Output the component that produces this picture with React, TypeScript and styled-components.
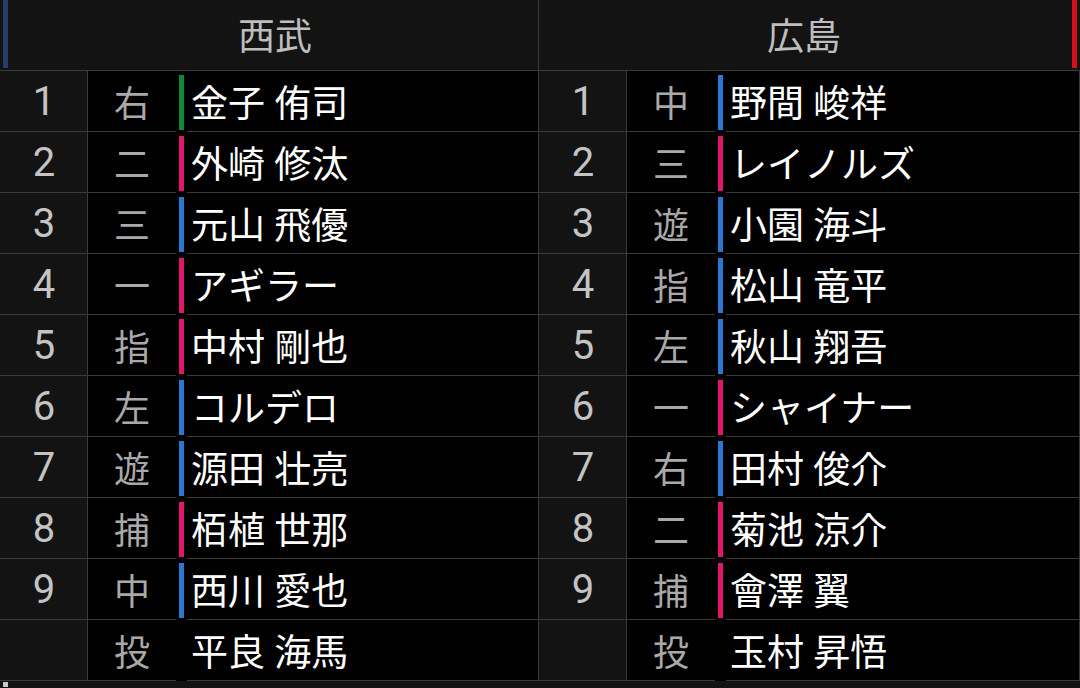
import React from "react";
import styled, { createGlobalStyle } from "styled-components";

const Global = createGlobalStyle`
  html, body { margin: 0; padding: 0; background: #131313; }
  body { font-family: "Roboto", "Noto Sans CJK JP", sans-serif; }
  #root { width: 1080px; height: 688px; overflow: hidden; }
`;

type Player = { num: string; pos: string; name: string; bar?: string };

const GREEN = "#0f8a34";
const PINK = "#e2166a";
const BLUE = "#2a78d2";

const seibu: Player[] = [
  { num: "1", pos: "右", name: "金子 侑司", bar: GREEN },
  { num: "2", pos: "二", name: "外崎 修汰", bar: PINK },
  { num: "3", pos: "三", name: "元山 飛優", bar: BLUE },
  { num: "4", pos: "一", name: "アギラー", bar: PINK },
  { num: "5", pos: "指", name: "中村 剛也", bar: PINK },
  { num: "6", pos: "左", name: "コルデロ", bar: BLUE },
  { num: "7", pos: "遊", name: "源田 壮亮", bar: BLUE },
  { num: "8", pos: "捕", name: "栢植 世那", bar: PINK },
  { num: "9", pos: "中", name: "西川 愛也", bar: BLUE },
  { num: "", pos: "投", name: "平良 海馬" },
];

const hiroshima: Player[] = [
  { num: "1", pos: "中", name: "野間 峻祥", bar: BLUE },
  { num: "2", pos: "三", name: "レイノルズ", bar: PINK },
  { num: "3", pos: "遊", name: "小園 海斗", bar: BLUE },
  { num: "4", pos: "指", name: "松山 竜平", bar: BLUE },
  { num: "5", pos: "左", name: "秋山 翔吾", bar: BLUE },
  { num: "6", pos: "一", name: "シャイナー", bar: PINK },
  { num: "7", pos: "右", name: "田村 俊介", bar: BLUE },
  { num: "8", pos: "二", name: "菊池 涼介", bar: PINK },
  { num: "9", pos: "捕", name: "會澤 翼", bar: PINK },
  { num: "", pos: "投", name: "玉村 昇悟" },
];

const LINE = "#3a3a3a";

const Page = styled.div`
  width: 1080px;
  height: 688px;
  background: #131313;
  display: flex;
  flex-direction: column;
`;

const Header = styled.div`
  display: grid;
  grid-template-columns: 539px 541px;
  height: 71px;
  border-bottom: 1px solid ${LINE};
`;

const TeamHead = styled.div<{ $accent: string; $side: "left" | "right"; $divider?: boolean }>`
  position: relative;
  display: flex;
  align-items: center;
  justify-content: center;
  color: #bdbdbd;
  font-size: 37px;
  padding-bottom: 2px;
  ${(p) => (p.$side === "left" ? "padding-left: 12px;" : "padding-right: 11px;")}
  box-sizing: border-box;
  border-right: ${(p) => (p.$divider ? `1px solid ${LINE}` : "none")};
  &::before {
    content: "";
    position: absolute;
    top: 0;
    height: 68px;
    width: 5px;
    background: ${(p) => p.$accent};
    ${(p) => (p.$side === "left" ? "left: 3px;" : "right: 3px;")}
  }
`;

const Body = styled.div`
  display: grid;
  grid-template-columns: 539px 541px;
`;

const Lineup = styled.div`
  display: flex;
  flex-direction: column;
  border-right: 1px solid ${LINE};
`;

const Row = styled.div`
  display: grid;
  grid-template-columns: 88px 88px 11px 1fr;
  height: 61px;
`;

const NumCell = styled.div`
  background: #131313;
  border-right: 1px solid ${LINE};
  border-bottom: 1px solid ${LINE};
  display: flex;
  align-items: center;
  justify-content: center;
  color: #c4c4c4;
  font-size: 40px;
  font-weight: 400;
  padding-top: 1px;
  padding-left: 1px;
`;

const PosCell = styled.div`
  background: #000;
  border-bottom: 1px solid ${LINE};
  display: flex;
  align-items: center;
  justify-content: center;
  color: #a9a9a9;
  font-size: 36px;
`;

const BarSlot = styled.div`
  background: #000;
  padding: 4px 0 2px 3px;
  display: flex;
`;

const Bar = styled.div<{ $color?: string }>`
  width: 5px;
  background: ${(p) => p.$color ?? "transparent"};
`;

const NameCell = styled.div`
  background: #000;
  border-bottom: 1px solid ${LINE};
  display: flex;
  align-items: center;
  padding-left: 4px;
  color: #ffffff;
  font-size: 37px;
  white-space: nowrap;
`;

const Footer = styled.div`
  height: 6px;
  padding-left: 3px;
  padding-top: 1px;
`;

const Thumb = styled.div`
  width: 5px;
  height: 5px;
  background: #c8c8c8;
`;

function Team({ players }: { players: Player[] }) {
  return (
    <Lineup>
      {players.map((p, i) => (
        <Row key={i}>
          <NumCell>{p.num}</NumCell>
          <PosCell>{p.pos}</PosCell>
          <BarSlot>
            <Bar $color={p.bar} />
          </BarSlot>
          <NameCell>{p.name}</NameCell>
        </Row>
      ))}
    </Lineup>
  );
}

export default function App() {
  return (
    <>
      <Global />
      <Page>
        <Header>
          <TeamHead $accent="#263d6e" $side="left" $divider>
            西武
          </TeamHead>
          <TeamHead $accent="#d4101c" $side="right">
            広島
          </TeamHead>
        </Header>
        <Body>
          <Team players={seibu} />
          <Team players={hiroshima} />
        </Body>
        <Footer>
          <Thumb />
        </Footer>
      </Page>
    </>
  );
}
